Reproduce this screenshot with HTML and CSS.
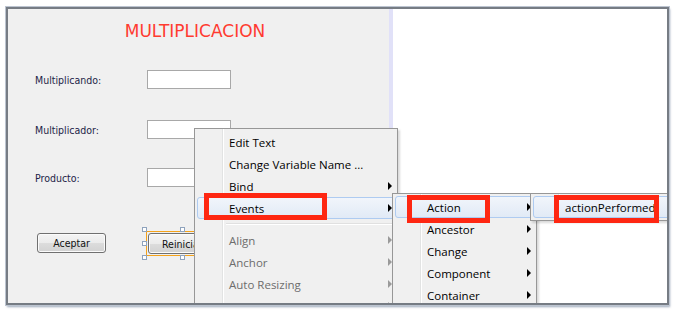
FILE: index.html
```html
<!DOCTYPE html>
<html lang="es">
  <head>
    <meta charset="UTF-8" />
    <title>Multiplicacion - Diseño</title>
    <link rel="stylesheet" href="styles.css">
  </head>
  <body>
    <div class="frame">
      <div class="design">
        <h1 class="title">MULTIPLICACION</h1>

        <div class="form-row first">
          <label>Multiplicando:</label>
          <div class="field"></div>
        </div>
        <div class="form-row second">
          <label>Multiplicador:</label>
          <div class="field"></div>
        </div>
        <div class="form-row third">
          <label>Producto:</label>
          <div class="field"></div>
        </div>

        <div class="button-row">
          <button class="swing-button">Aceptar</button>
          <div class="selected">
            <button class="swing-button">Reiniciar</button>
            <span class="handle tl"></span>
            <span class="handle tm"></span>
            <span class="handle tr"></span>
            <span class="handle ml"></span>
            <span class="handle mr"></span>
            <span class="handle bl"></span>
            <span class="handle bm"></span>
            <span class="handle br"></span>
          </div>
        </div>
      </div>
      <div class="strip"></div>
      <div class="canvas"></div>

      <!-- context menu -->
      <div class="menu menu-main">
        <div class="menu-item">Edit Text</div>
        <div class="menu-item">Change Variable Name ...</div>
        <div class="menu-item sub">Bind</div>
        <div class="menu-item sub active">Events</div>
        <div class="menu-sep"></div>
        <div class="menu-item sub disabled">Align</div>
        <div class="menu-item sub disabled">Anchor</div>
        <div class="menu-item sub disabled">Auto Resizing</div>
        <div class="menu-item sub disabled">Same Size</div>
      </div>

      <div class="menu menu-events">
        <div class="menu-item sub active">Action</div>
        <div class="menu-item sub">Ancestor</div>
        <div class="menu-item sub">Change</div>
        <div class="menu-item sub">Component</div>
        <div class="menu-item sub">Container</div>
      </div>

      <div class="menu menu-action">
        <div class="menu-item active">actionPerformed</div>
      </div>

      <!-- red marks -->
      <div class="mark mark-events"></div>
      <div class="mark mark-action"></div>
      <div class="mark mark-performed"></div>
    </div>
  </body>
</html>
```

FILE: styles.css
```css
* {
  margin: 0;
  padding: 0;
  box-sizing: border-box;
}

body {
  background: #fff;
  width: 674px;
  height: 311px;
  overflow: hidden;
}

.frame {
  position: relative;
  display: flex;
  width: 663px;
  height: 298px;
  margin: 7px 0 0 6px;
  border: 2px solid #767c84;
  box-shadow: 0 0 0 1px #bcc4d0, 1px 2px 2px rgba(90, 110, 140, 0.6);
  overflow: hidden;
}

.design {
  width: 381px;
  background: #f0f0f0;
  font-family: "DejaVu Sans Condensed", "DejaVu Sans", sans-serif;
}

.strip {
  width: 4px;
  background: #e1e1f8;
}

.canvas {
  flex: 1;
  background: #fff;
}

.title {
  margin-top: 12px;
  padding-right: 7px;
  text-align: center;
  font-family: "DejaVu Sans", sans-serif;
  font-size: 17px;
  font-weight: normal;
  line-height: 20px;
  color: #ff3b30;
}

.form-row {
  display: flex;
  align-items: center;
  height: 19px;
  padding-left: 27px;
}

.form-row.first { margin-top: 29px; }
.form-row.second { margin-top: 31px; }
.form-row.third { margin-top: 29px; }

.form-row label {
  width: 112px;
  font-size: 10.5px;
  color: #1e1e48;
}

.field {
  width: 84px;
  height: 19px;
  background: #fff;
  border: 1px solid #a8a8a8;
}

.button-row {
  display: flex;
  align-items: flex-start;
  margin-top: 46px;
  padding-left: 29px;
}

.swing-button {
  width: 69px;
  height: 20px;
  border: 1px solid #707070;
  border-radius: 3px;
  background: linear-gradient(#f4f4f4 0%, #ebebeb 50%, #dcdcdc 52%, #d2d2d2 100%);
  box-shadow: inset 0 0 0 1px #fbfbfb;
  font-family: "DejaVu Sans Condensed", "DejaVu Sans", sans-serif;
  font-size: 10.5px;
  color: #111;
}

.selected {
  position: relative;
  margin-left: 40px;
  margin-top: -2px;
  padding: 1px;
  border: 1px solid #f5a31a;
}

.selected .swing-button {
  display: block;
  height: 21px;
  text-align: left;
  padding-left: 13px;
}

.handle {
  position: absolute;
  width: 5px;
  height: 5px;
  background: #fff;
  border: 1px solid #8fa3bd;
}

.handle.tl { left: -5px; top: -5px; }
.handle.tm { left: calc(50% - 3px); top: -5px; }
.handle.tr { right: -5px; top: -5px; }
.handle.ml { left: -5px; top: calc(50% - 3px); }
.handle.mr { right: -5px; top: calc(50% - 3px); }
.handle.bl { left: -5px; bottom: -5px; }
.handle.bm { left: calc(50% - 3px); bottom: -5px; }
.handle.br { right: -5px; bottom: -5px; }

/* menus */
.menu {
  position: absolute;
  padding: 2px 0;
  border: 1px solid #979797;
  background: linear-gradient(to right, #f0f0f0 27px, #e2e3e3 27px, #e2e3e3 28px, #fff 28px, #fff 29px, #f0f0f0 29px);
  box-shadow: 2px 2px 2px rgba(0, 0, 0, 0.15);
  font-family: "Open Sans", sans-serif;
  font-size: 11.5px;
  color: #000;
}

.menu-main {
  left: 186px;
  top: 119px;
  width: 204px;
}

.menu-events {
  left: 384px;
  top: 184px;
  width: 145px;
}

.menu-action {
  left: 522px;
  top: 184px;
  width: 145px;
}

.menu-item {
  position: relative;
  height: 22px;
  line-height: 21px;
  margin: 0 2px;
  padding-left: 31px;
  border: 1px solid transparent;
  border-radius: 3px;
  white-space: nowrap;
}

.menu-item.active {
  border-color: #aecbf1;
  background: linear-gradient(#f1f5fb, #e1eaf6);
}

.menu-item.disabled {
  color: #6d6d6d;
}

.menu-item.sub::after {
  content: "";
  position: absolute;
  right: 2px;
  top: 6px;
  border-left: 4px solid #000;
  border-top: 4px solid transparent;
  border-bottom: 4px solid transparent;
}

.menu-item.sub.disabled::after {
  border-left-color: #9a9a9a;
}

.menu-sep {
  height: 10px;
  margin-left: 31px;
  background: linear-gradient(#f0f0f0 4px, #e0e0e0 4px, #e0e0e0 5px, #fff 5px, #fff 6px, transparent 6px);
}

/* red annotation boxes */
.mark {
  position: absolute;
  border: 5px solid #fe2712;
}

.mark-events {
  left: 196px;
  top: 184px;
  width: 123px;
  height: 27px;
}

.mark-action {
  left: 399px;
  top: 186px;
  width: 83px;
  height: 28px;
}

.mark-performed {
  left: 546px;
  top: 186px;
  width: 105px;
  height: 28px;
}
```
